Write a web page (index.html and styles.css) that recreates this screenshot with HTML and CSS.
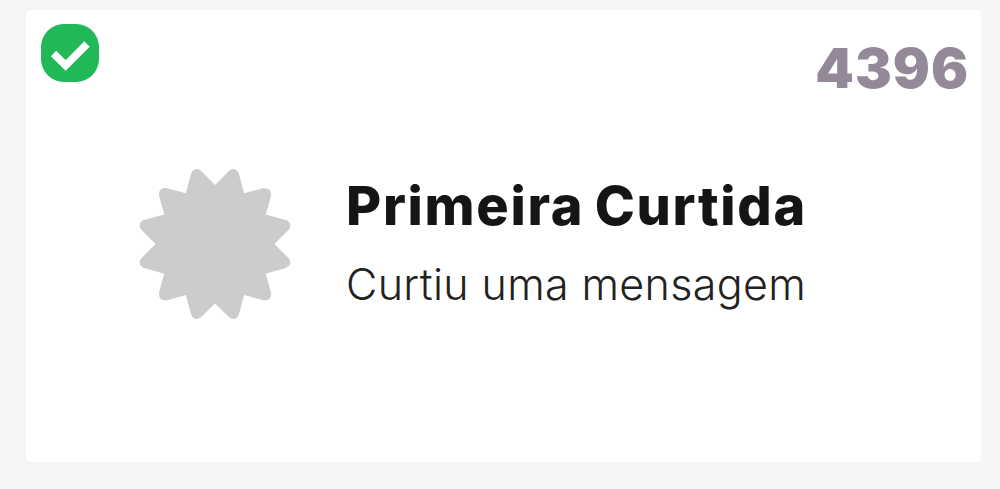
FILE: index.html
```html
<!DOCTYPE html>
<html lang="pt-BR">

<head>
    <meta charset="UTF-8">
    <meta name="viewport" content="width=device-width, initial-scale=1.0">
    <title>Primeira Curtida</title>
    <link rel="stylesheet" href="styles.css">
</head>

<body>
    <div class="card">
        <div class="card-top">
            <svg class="check" viewBox="0 0 58 58">
                <rect width="58" height="58" rx="23" fill="#21b958" />
                <path d="M12.500 29.500L24.700 41.500L46 20" fill="none" stroke="#fff" stroke-width="7.500" />
            </svg>
            <span class="points">4396</span>
        </div>
        <div class="card-body">
            <svg class="badge" viewBox="27 25 458 456">
                <path fill="#ccc" d="M256 75L297 34Q305 25 315 28Q325 31 328 42L344 100L401 85Q425 82 425 104Q424 115 409 164L469 181Q482 185 483 198Q483 205 478 210L435 253L478 296Q483 301 483 309Q482 320 469 325L409 343L425 401Q426 423 404 423Q393 421 344 407L328 465Q325 476 315 479Q305 480 297 472L256 432L215 472Q207 480 197 479Q187 476 184 465L168 407L110 423Q87 424 87 402Q89 390 103 343L42 325Q30 321 29 309Q29 301 34 296L77 253L34 210Q29 205 29 198Q30 185 42 181L103 164L87 106Q86 83 108 84Q119 86 168 100L184 42Q187 31 197 28Q207 25 215 34Z" />
            </svg>
            <div class="text">
                <h1 class="title">Primeira Curtida</h1>
                <p class="desc">Curtiu uma mensagem</p>
            </div>
        </div>
    </div>
</body>

</html>
```
FILE: styles.css
```css
* {
    box-sizing: border-box;
}

body {
    margin: 0;
    padding: 10px 19px 27px 26px;
    height: 489px;
    background: #f6f6f6;
    font-family: Inter, "Liberation Sans", sans-serif;
}

.card {
    height: 452px;
    background: #fff;
    border-radius: 4px;
}

.card-top {
    display: flex;
    justify-content: space-between;
    height: 158px;
    padding: 14px 12px 0 15px;
}

.check {
    width: 58px;
    height: 58px;
}

.points {
    margin-top: 10px;
    color: #938998;
    font-size: 55px;
    font-weight: 900;
    line-height: 68px;
    letter-spacing: 1px;
}

.card-body {
    display: flex;
    padding-left: 113px;
}

.badge {
    width: 152px;
    height: 152px;
}

.text {
    margin-left: 55px;
    white-space: nowrap;
}

.title {
    margin: 5px 0 0;
    color: #151515;
    font-size: 54px;
    font-weight: 800;
    line-height: 66px;
    letter-spacing: 1.7px;
    word-spacing: -3px;
}

.desc {
    margin: 17px 0 0;
    color: #222;
    font-size: 43px;
    font-weight: 300;
    line-height: 56px;
    letter-spacing: 0.35px;
}
```
